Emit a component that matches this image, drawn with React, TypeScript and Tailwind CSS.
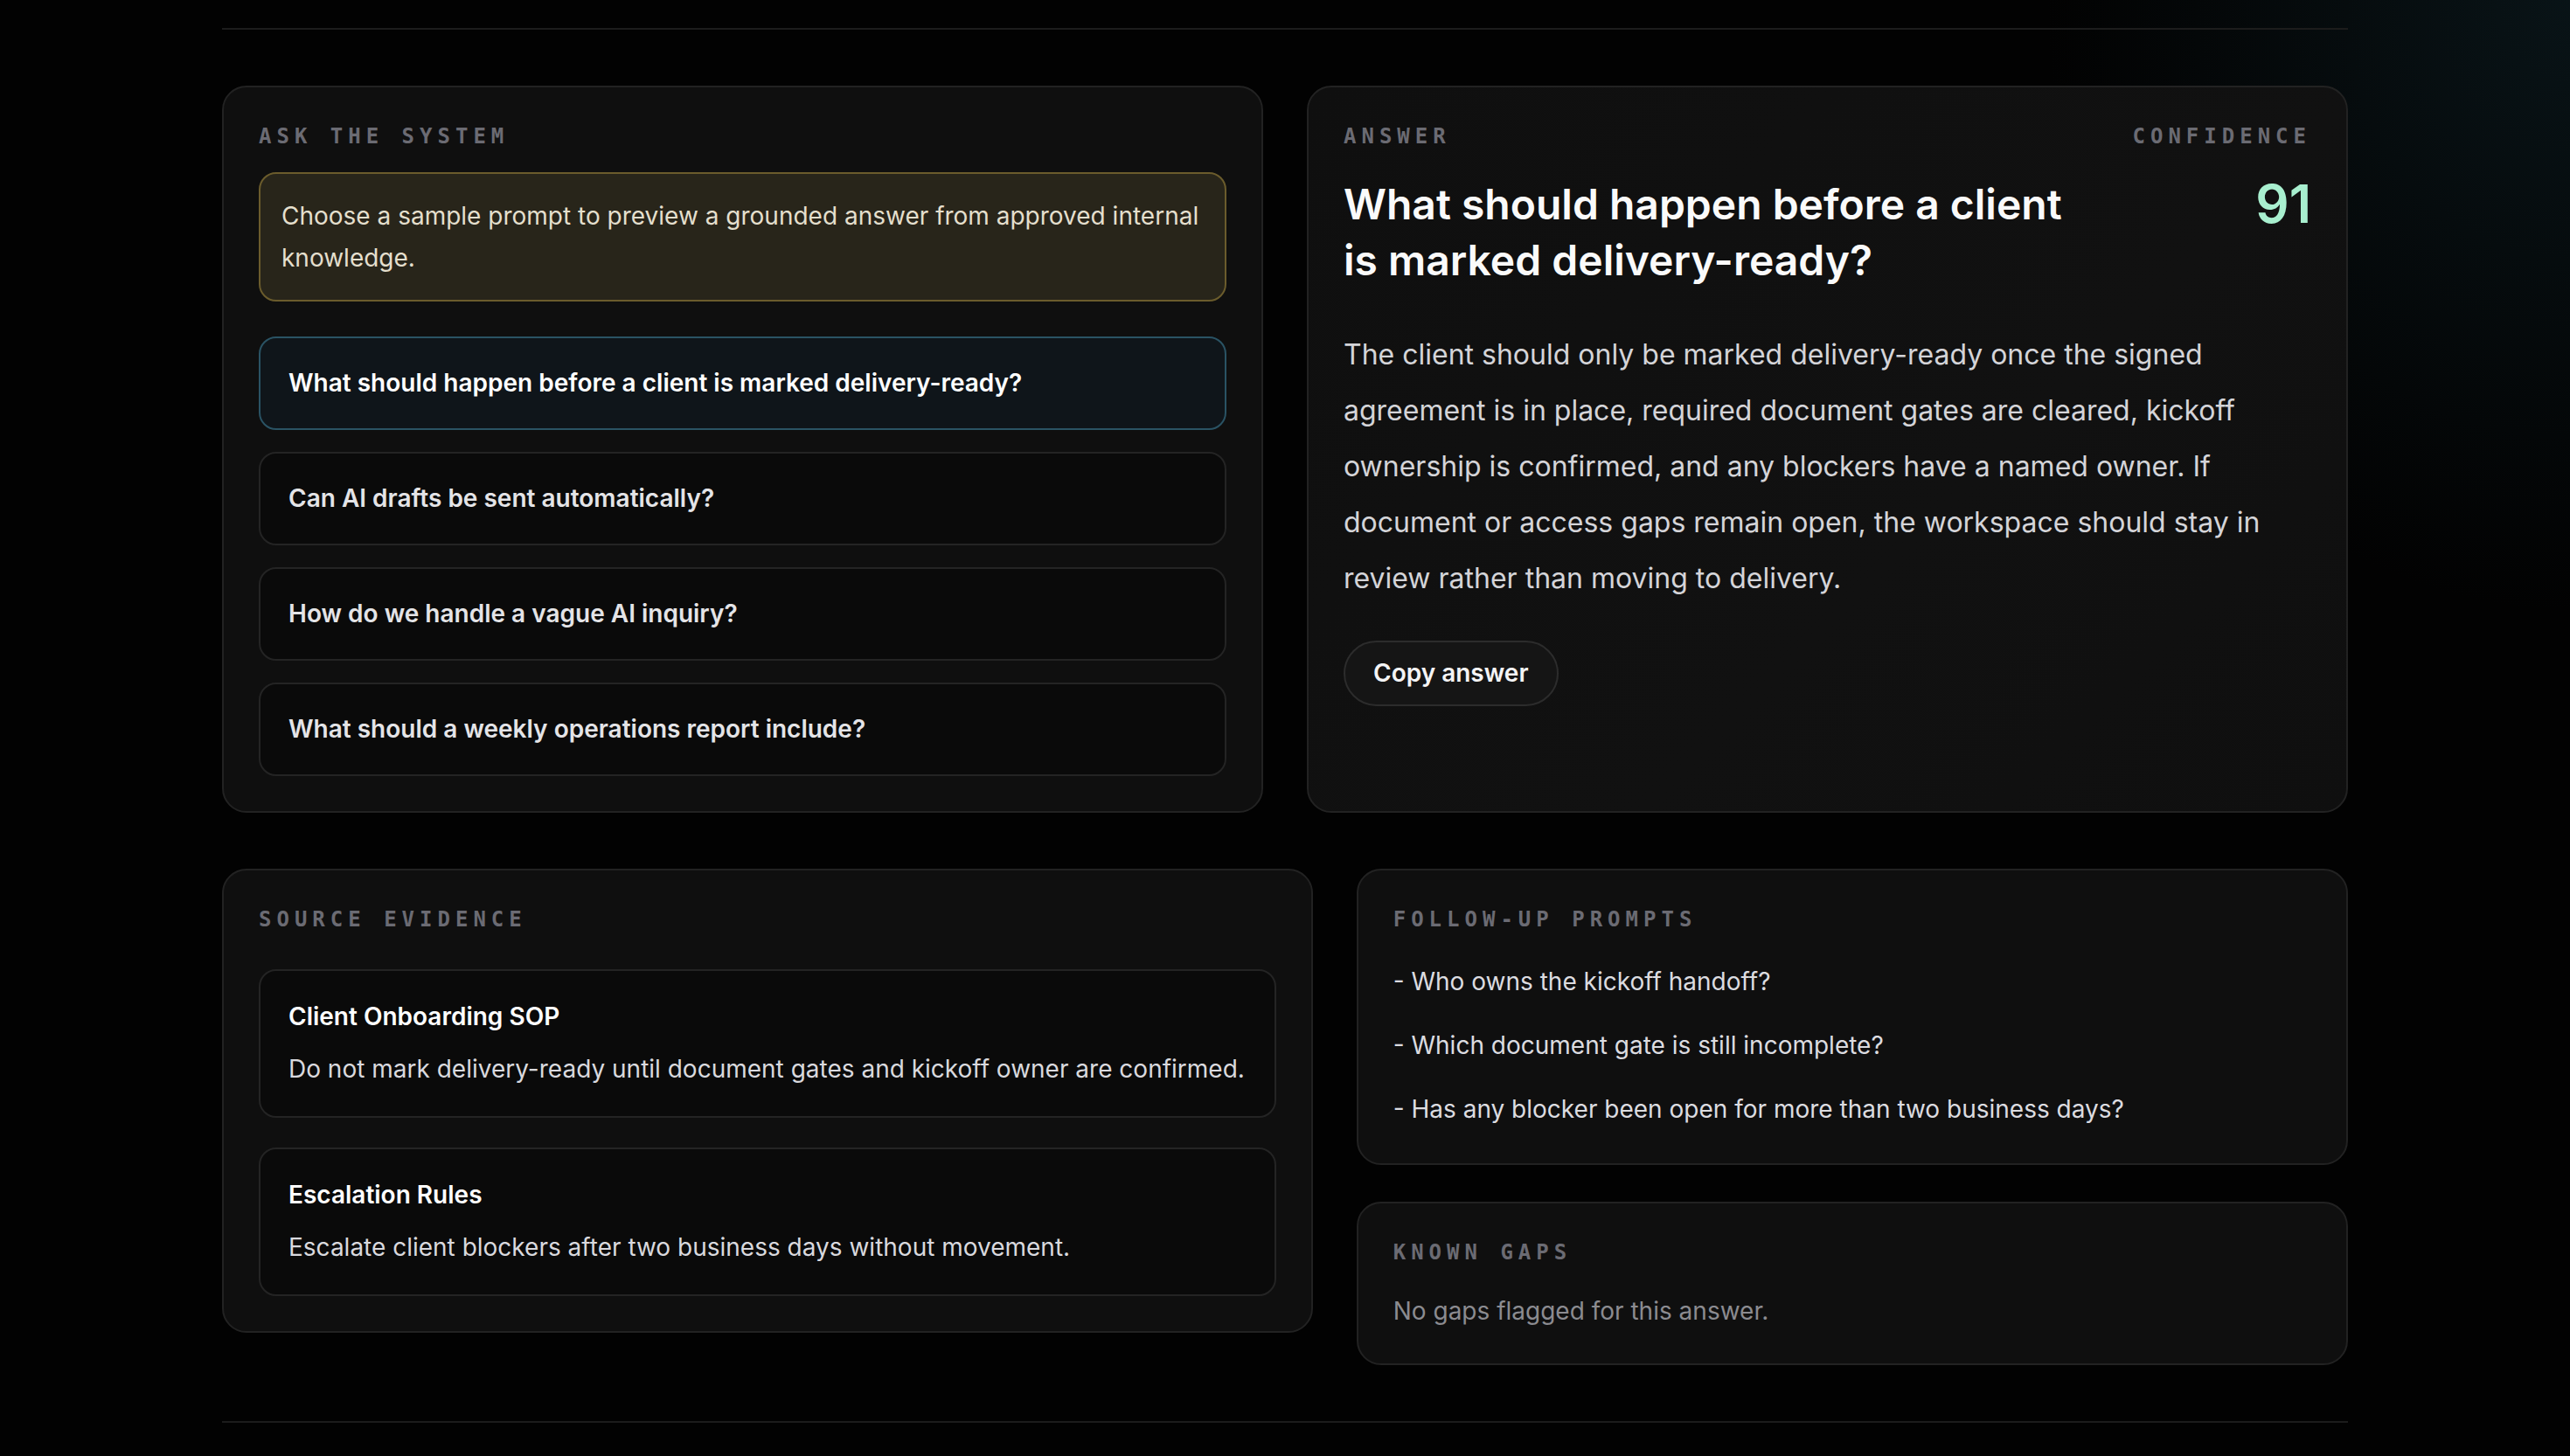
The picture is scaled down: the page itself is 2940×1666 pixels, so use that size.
import { useState } from "react";

const prompts = [
  "What should happen before a client is marked delivery-ready?",
  "Can AI drafts be sent automatically?",
  "How do we handle a vague AI inquiry?",
  "What should a weekly operations report include?",
];

const sources = [
  {
    title: "Client Onboarding SOP",
    body: "Do not mark delivery-ready until document gates and kickoff owner are confirmed.",
  },
  {
    title: "Escalation Rules",
    body: "Escalate client blockers after two business days without movement.",
  },
];

const followUps = [
  "Who owns the kickoff handoff?",
  "Which document gate is still incomplete?",
  "Has any blocker been open for more than two business days?",
];

function Label({ children }: { children: React.ReactNode }) {
  return (
    <div className="font-['DejaVu_Sans_Mono',monospace] text-[24px] leading-[32px] font-bold uppercase tracking-[0.25em] text-[#6b6b73]">
      {children}
    </div>
  );
}

export default function App() {
  const [active, setActive] = useState(0);

  return (
    <div className="min-h-screen bg-[#020202] bg-[radial-gradient(ellipse_600px_700px_at_100%_0%,rgba(22,52,62,0.35),transparent)] font-['Inter','Noto_Sans',sans-serif] pt-[32px]">
      <section className="mx-auto w-[2432px] border-y-2 border-[#1c1c1c] py-[64px]">
        {/* Top row */}
        <div className="grid grid-cols-2 gap-[50px]">
          {/* Ask */}
          <div className="rounded-[28px] border-2 border-[#222222] bg-[#0f0f0f] p-10">
            <Label>Ask the system</Label>
            <div className="mt-[25px] rounded-[20px] border-2 border-[#6b5c2c] bg-[#28251a] px-6 py-6 text-[28px] leading-[48px] text-[#e4dfcd]">
              Choose a sample prompt to preview a grounded answer from approved internal knowledge.
            </div>
            <div className="mt-[40px] flex flex-col gap-[25px]">
              {prompts.map((p, i) => (
                <button
                  key={p}
                  onClick={() => setActive(i)}
                  className={`rounded-[20px] border-2 px-8 py-[30px] text-left text-[28px] leading-[43px] font-semibold ${
                    active === i
                      ? "border-[#2a5364] bg-[#0f151a] text-white"
                      : "border-[#242424] bg-[#0a0a0a] text-[#e4e4e7]"
                  }`}
                >
                  {p}
                </button>
              ))}
            </div>
          </div>

          {/* Answer */}
          <div className="rounded-[28px] border-2 border-[#222222] bg-[#0f0f0f] bg-[linear-gradient(135deg,#0f0f0f,#111111_60%,#0f0f0f)] p-10">
            <div className="flex justify-between gap-10">
              <div>
                <Label>Answer</Label>
                <h2 className="mt-[30px] max-w-[860px] text-[48px] leading-[64px] font-semibold text-[#fafafa]">
                  What should happen before a client is marked delivery-ready?
                </h2>
              </div>
              <div className="flex flex-col items-end">
                <Label>Confidence</Label>
                <div className="mt-[31px] text-[60px] leading-[60px] font-semibold text-[#a8efcf]">91</div>
              </div>
            </div>
            <p className="mt-[44px] text-[32px] leading-[64px] text-[#d4d4d8]">
              The client should only be marked delivery-ready once the signed agreement is in place,
              required document gates are cleared, kickoff ownership is confirmed, and any blockers
              have a named owner. If document or access gaps remain open, the workspace should stay in
              review rather than moving to delivery.
            </p>
            <button className="mt-[39px] rounded-full border-2 border-[#2c2c2c] bg-[#151515] px-8 py-[16px] text-[28px] leading-[39px] font-semibold text-[#f4f4f5]">
              Copy answer
            </button>
          </div>
        </div>

        {/* Bottom row */}
        <div className="mt-[64px] grid grid-cols-[1.1fr_1fr] items-start gap-[50px]">
          <div className="rounded-[28px] border-2 border-[#222222] bg-[#0f0f0f] p-10">
            <Label>Source evidence</Label>
            <div className="mt-[41px] flex flex-col gap-[34px]">
              {sources.map((s) => (
                <div key={s.title} className="rounded-[20px] border-2 border-[#242424] bg-[#0a0a0a] px-8 py-8">
                  <div className="text-[28px] leading-[40px] font-semibold text-white">{s.title}</div>
                  <div className="mt-[18px] text-[28px] leading-[44px] text-[#d9d9de]">{s.body}</div>
                </div>
              ))}
            </div>
          </div>

          <div className="flex flex-col gap-[42px]">
            <div className="rounded-[28px] border-2 border-[#222222] bg-[#0f0f0f] p-10">
              <Label>Follow-up prompts</Label>
              <ul className="mt-[33px] flex flex-col gap-[29px]">
                {followUps.map((f) => (
                  <li key={f} className="text-[28px] leading-[44px] text-[#dcdce0]">
                    - {f}
                  </li>
                ))}
              </ul>
            </div>
            <div className="rounded-[28px] border-2 border-[#222222] bg-[#0f0f0f] p-10">
              <Label>Known gaps</Label>
              <p className="mt-[31px] text-[28px] leading-[40px] text-[#8b8b90]">No gaps flagged for this answer.</p>
            </div>
          </div>
        </div>
      </section>
    </div>
  );
}
